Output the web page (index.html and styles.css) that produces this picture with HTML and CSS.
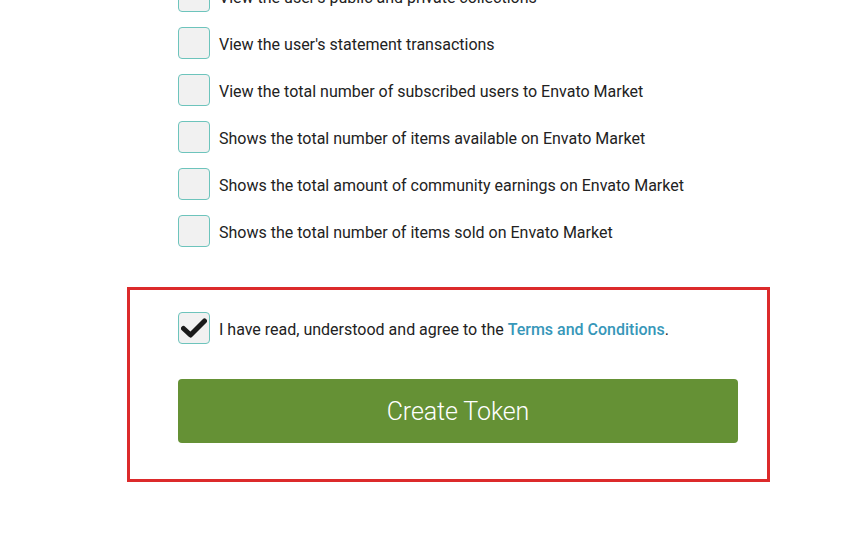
FILE: index.html
```html
<!DOCTYPE html>
<html>
<head>
<meta charset="utf-8">
<link rel="stylesheet" href="styles.css">
</head>
<body>
<div class="page">
  <ul class="perms">
    <li class="perm"><span class="box"></span><span class="label">View the user's public and private collections</span></li>
    <li class="perm"><span class="box"></span><span class="label">View the user's statement transactions</span></li>
    <li class="perm"><span class="box"></span><span class="label">View the total number of subscribed users to Envato Market</span></li>
    <li class="perm"><span class="box"></span><span class="label">Shows the total number of items available on Envato Market</span></li>
    <li class="perm"><span class="box"></span><span class="label">Shows the total amount of community earnings on Envato Market</span></li>
    <li class="perm"><span class="box"></span><span class="label">Shows the total number of items sold on Envato Market</span></li>
  </ul>
  <section class="confirm">
    <div class="perm agree">
      <span class="box checked"><svg viewBox="0 0 26 20" width="26" height="20"><path d="M2.5 10.5 L9.5 17 L23.5 3" fill="none" stroke="#1a1a1a" stroke-width="5" stroke-linecap="round" stroke-linejoin="round"/></svg></span>
      <span class="label">I have read, understood and agree to the <a class="link" href="#">Terms and Conditions</a>.</span>
    </div>
    <button class="create">Create Token</button>
  </section>
</div>
</body>
</html>
```
FILE: styles.css
```css
html, body {
  margin: 0;
  padding: 0;
  background: #fff;
}
body {
  font-family: Roboto, "Liberation Sans", sans-serif;
  color: #222;
  width: 857px;
  height: 543px;
  overflow: hidden;
}
.page {
  padding-left: 178px;
}
.perms {
  list-style: none;
  margin: -20px 0 0 0;
  padding: 0;
  display: flex;
  flex-direction: column;
  gap: 15px;
}
.perm {
  display: flex;
  align-items: center;
  gap: 9px;
  height: 32px;
}
.box {
  box-sizing: border-box;
  width: 32px;
  height: 32px;
  flex: none;
  border: 1px solid #6dc4bc;
  border-radius: 4px;
  background: #f1f1f1;
  display: flex;
  align-items: center;
  justify-content: center;
}
.box svg {
  display: block;
  margin-top: -1px;
}
.label {
  font-size: 16px;
  line-height: 20px;
  margin-top: 4px;
}
.link {
  color: #3797b9;
  font-weight: 500;
  text-decoration: none;
}
.confirm {
  margin: 40px 0 0 -51px;
  width: 643px;
  box-sizing: border-box;
  border: 3px solid #dc2a2b;
  padding: 22px 29px 36px 48px;
}
.agree {
  margin: 0;
}
.create {
  display: block;
  margin-top: 35px;
  width: 560px;
  height: 64px;
  border: 0;
  border-radius: 4px;
  background: #659135;
  color: #fff;
  font-family: Roboto, "Liberation Sans", sans-serif;
  font-weight: 300;
  font-size: 25px;
  letter-spacing: -0.1px;
  padding: 0;
  cursor: pointer;
}
```
